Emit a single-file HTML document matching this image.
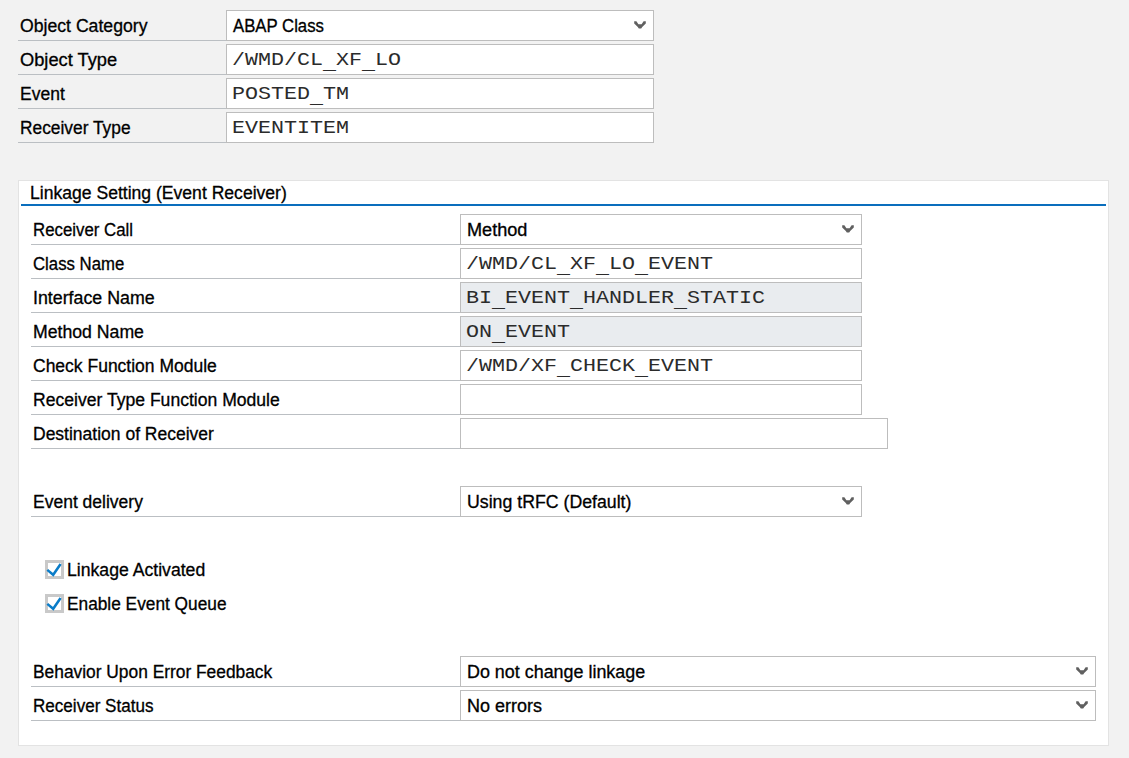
<!DOCTYPE html>
<html><head><meta charset="utf-8">
<style>
html,body{margin:0;padding:0;}
body{width:1129px;height:758px;background:#f2f2f2;position:relative;overflow:hidden;}
.lab{position:absolute;font-family:"Liberation Sans",sans-serif;font-size:17.5px;line-height:30px;color:#000;white-space:nowrap;-webkit-text-stroke:0.3px #000;}
.mono{position:absolute;font-family:"Liberation Mono",monospace;font-size:21.67px;line-height:30px;transform:scaleY(0.85);transform-origin:0 21px;color:#2b2b2b;white-space:nowrap;}
.ul{position:absolute;height:1px;background:#bbbfc3;}
.box{position:absolute;height:31px;box-sizing:border-box;border:1px solid #bdbdbd;background:#fff;}
.box.dis{background:#e9ecef;}
.chev{position:absolute;}
.us{position:relative;top:4px;}
.cb{position:absolute;}
.panel{position:absolute;left:18px;top:180px;width:1091px;height:566px;box-sizing:border-box;border:1px solid #e3e3e3;background:#fff;}
.blue{position:absolute;left:21px;top:204px;width:1085px;height:2px;background:#0a6ebd;}
</style></head><body>
<div class="lab" style="left:20px;top:11px;transform:scaleX(1.0080);transform-origin:0 0;">Object Category</div>
<div class="ul" style="left:18px;top:40px;width:208px"></div>
<div class="box" style="left:226px;top:10px;width:428px"></div>
<div class="lab" style="left:233px;top:11px;transform:scaleX(0.9574);transform-origin:0 0;">ABAP Class</div>
<svg class="chev" style="left:634px;top:21px" width="12" height="8" viewBox="0 0 12 8"><path d="M0.2 0.3 H2.4 L4.4 3.3 H7.6 L9.6 0.3 H11.8 V2.4 L8.2 6 L7.2 7.6 H4.8 L3.8 6 L0.2 2.4 Z" fill="#606060"/></svg>
<div class="lab" style="left:20px;top:45px;transform:scaleX(1.0440);transform-origin:0 0;">Object Type</div>
<div class="ul" style="left:18px;top:74px;width:208px"></div>
<div class="box" style="left:226px;top:44px;width:428px"></div>
<div class="mono" style="left:232px;top:45px;">/WMD/CL<span class="us">_</span>XF<span class="us">_</span>LO</div>
<div class="lab" style="left:20px;top:79px;">Event</div>
<div class="ul" style="left:18px;top:108px;width:208px"></div>
<div class="box" style="left:226px;top:78px;width:428px"></div>
<div class="mono" style="left:232px;top:79px;">POSTED<span class="us">_</span>TM</div>
<div class="lab" style="left:20px;top:113px;transform:scaleX(0.9909);transform-origin:0 0;">Receiver Type</div>
<div class="ul" style="left:18px;top:142px;width:208px"></div>
<div class="box" style="left:226px;top:112px;width:428px"></div>
<div class="mono" style="left:232px;top:113px;">EVENTITEM</div>
<div class="panel"></div>
<div class="lab" style="left:30px;top:178px;transform:scaleX(1.0039);transform-origin:0 0;">Linkage Setting (Event Receiver)</div>
<div class="blue"></div>
<div class="lab" style="left:33px;top:215px;transform:scaleX(0.9608);transform-origin:0 0;">Receiver Call</div>
<div class="ul" style="left:31px;top:244px;width:429px"></div>
<div class="box" style="left:460px;top:214px;width:402px"></div>
<div class="lab" style="left:467px;top:215px;transform:scaleX(1.0357);transform-origin:0 0;">Method</div>
<svg class="chev" style="left:842px;top:225px" width="12" height="8" viewBox="0 0 12 8"><path d="M0.2 0.3 H2.4 L4.4 3.3 H7.6 L9.6 0.3 H11.8 V2.4 L8.2 6 L7.2 7.6 H4.8 L3.8 6 L0.2 2.4 Z" fill="#606060"/></svg>
<div class="lab" style="left:33px;top:249px;transform:scaleX(0.9574);transform-origin:0 0;">Class Name</div>
<div class="ul" style="left:31px;top:278px;width:429px"></div>
<div class="box" style="left:460px;top:248px;width:402px"></div>
<div class="mono" style="left:466px;top:249px;">/WMD/CL<span class="us">_</span>XF<span class="us">_</span>LO<span class="us">_</span>EVENT</div>
<div class="lab" style="left:33px;top:283px;transform:scaleX(1.0171);transform-origin:0 0;">Interface Name</div>
<div class="ul" style="left:31px;top:312px;width:429px"></div>
<div class="box dis" style="left:460px;top:282px;width:402px"></div>
<div class="mono" style="left:466px;top:283px;">BI<span class="us">_</span>EVENT<span class="us">_</span>HANDLER<span class="us">_</span>STATIC</div>
<div class="lab" style="left:33px;top:317px;transform:scaleX(1.0093);transform-origin:0 0;">Method Name</div>
<div class="ul" style="left:31px;top:346px;width:429px"></div>
<div class="box dis" style="left:460px;top:316px;width:402px"></div>
<div class="mono" style="left:466px;top:317px;">ON<span class="us">_</span>EVENT</div>
<div class="lab" style="left:33px;top:351px;">Check Function Module</div>
<div class="ul" style="left:31px;top:380px;width:429px"></div>
<div class="box" style="left:460px;top:350px;width:402px"></div>
<div class="mono" style="left:466px;top:351px;">/WMD/XF<span class="us">_</span>CHECK<span class="us">_</span>EVENT</div>
<div class="lab" style="left:33px;top:385px;transform:scaleX(1.0041);transform-origin:0 0;">Receiver Type Function Module</div>
<div class="ul" style="left:31px;top:414px;width:429px"></div>
<div class="box" style="left:460px;top:384px;width:402px"></div>
<div class="lab" style="left:33px;top:419px;">Destination of Receiver</div>
<div class="ul" style="left:31px;top:448px;width:429px"></div>
<div class="box" style="left:460px;top:418px;width:428px"></div>
<div class="lab" style="left:33px;top:487px;">Event delivery</div>
<div class="ul" style="left:31px;top:516px;width:429px"></div>
<div class="box" style="left:460px;top:486px;width:402px"></div>
<div class="lab" style="left:467px;top:487px;transform:scaleX(1.0125);transform-origin:0 0;">Using tRFC (Default)</div>
<svg class="chev" style="left:842px;top:497px" width="12" height="8" viewBox="0 0 12 8"><path d="M0.2 0.3 H2.4 L4.4 3.3 H7.6 L9.6 0.3 H11.8 V2.4 L8.2 6 L7.2 7.6 H4.8 L3.8 6 L0.2 2.4 Z" fill="#606060"/></svg>
<svg class="cb" style="left:45px;top:560px" width="19" height="19" viewBox="0 0 19 19"><rect x="1.5" y="1.5" width="16" height="16" fill="#fff" stroke="#c9c9c9" stroke-width="3"/><path d="M2.3 9.9 L8.2 14.8 L15.6 4.0" fill="none" stroke="#0a7cc8" stroke-width="2.5"/></svg>
<div class="lab" style="left:67px;top:555px;transform:scaleX(1.0074);transform-origin:0 0;">Linkage Activated</div>
<svg class="cb" style="left:45px;top:594px" width="19" height="19" viewBox="0 0 19 19"><rect x="1.5" y="1.5" width="16" height="16" fill="#fff" stroke="#c9c9c9" stroke-width="3"/><path d="M2.3 9.9 L8.2 14.8 L15.6 4.0" fill="none" stroke="#0a7cc8" stroke-width="2.5"/></svg>
<div class="lab" style="left:67px;top:589px;transform:scaleX(0.9875);transform-origin:0 0;">Enable Event Queue</div>
<div class="lab" style="left:33px;top:657px;transform:scaleX(0.9917);transform-origin:0 0;">Behavior Upon Error Feedback</div>
<div class="ul" style="left:31px;top:686px;width:429px"></div>
<div class="box" style="left:460px;top:656px;width:636px"></div>
<div class="lab" style="left:467px;top:657px;transform:scaleX(1.0231);transform-origin:0 0;">Do not change linkage</div>
<svg class="chev" style="left:1076px;top:667px" width="12" height="8" viewBox="0 0 12 8"><path d="M0.2 0.3 H2.4 L4.4 3.3 H7.6 L9.6 0.3 H11.8 V2.4 L8.2 6 L7.2 7.6 H4.8 L3.8 6 L0.2 2.4 Z" fill="#606060"/></svg>
<div class="lab" style="left:33px;top:691px;transform:scaleX(0.9754);transform-origin:0 0;">Receiver Status</div>
<div class="ul" style="left:31px;top:720px;width:429px"></div>
<div class="box" style="left:460px;top:690px;width:636px"></div>
<div class="lab" style="left:467px;top:691px;transform:scaleX(1.0282);transform-origin:0 0;">No errors</div>
<svg class="chev" style="left:1076px;top:701px" width="12" height="8" viewBox="0 0 12 8"><path d="M0.2 0.3 H2.4 L4.4 3.3 H7.6 L9.6 0.3 H11.8 V2.4 L8.2 6 L7.2 7.6 H4.8 L3.8 6 L0.2 2.4 Z" fill="#606060"/></svg>
</body></html>
